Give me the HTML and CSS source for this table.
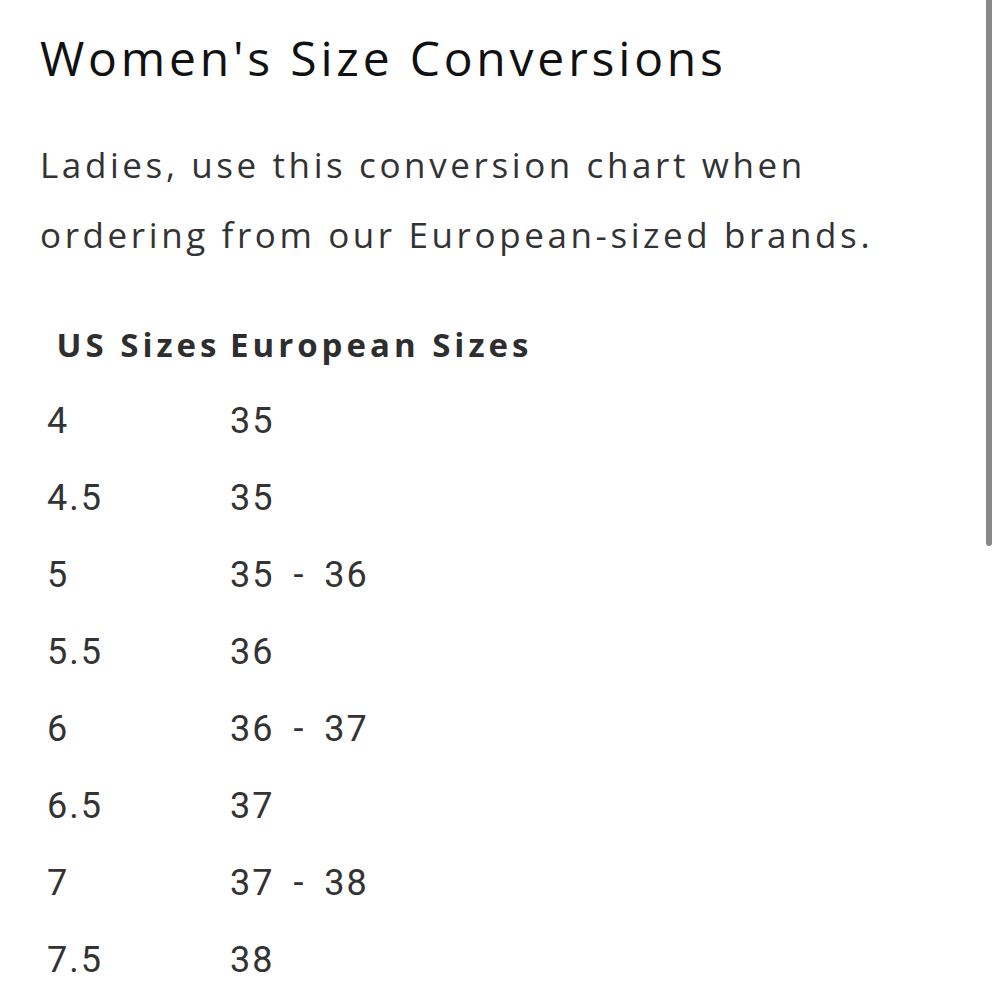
FILE: index.html
```html
<!DOCTYPE html>
<html lang="en">
<head>
<meta charset="utf-8">
<title>Women's Size Conversions</title>
<link rel="stylesheet" href="styles.css">
</head>
<body>
<main class="page">
  <h1 class="title">Women's Size Conversions</h1>
  <p class="intro">Ladies, use this conversion chart when ordering from our European-sized brands.</p>
  <table class="sizes">
    <thead>
      <tr><th class="col-us">US Sizes</th><th class="col-eu">European Sizes</th></tr>
    </thead>
    <tbody>
      <tr><td>4</td><td>35</td></tr>
      <tr><td>4.5</td><td>35</td></tr>
      <tr><td>5</td><td>35 - 36</td></tr>
      <tr><td>5.5</td><td>36</td></tr>
      <tr><td>6</td><td>36 - 37</td></tr>
      <tr><td>6.5</td><td>37</td></tr>
      <tr><td>7</td><td>37 - 38</td></tr>
      <tr><td>7.5</td><td>38</td></tr>
    </tbody>
  </table>
</main>
<div class="scrollbar"></div>
</body>
</html>
```
FILE: styles.css
```css
html, body {
  margin: 0;
  padding: 0;
  background: #ffffff;
  overflow: hidden;
}
.page {
  padding: 28px 0 0 40px;
  font-family: "Open Sans", "DejaVu Sans", sans-serif;
}
.title {
  margin: 0;
  font-size: 48px;
  line-height: 60px;
  font-weight: 400;
  color: #111111;
  letter-spacing: 3.8px;
}
.intro {
  margin: 42px 0 0 0;
  max-width: 880px;
  font-size: 35px;
  line-height: 70px;
  font-weight: 400;
  color: #333333;
  letter-spacing: 3.6px;
}
.sizes {
  margin: 50px 0 0 7px;
  border-collapse: collapse;
  border-spacing: 0;
}
.sizes th {
  padding: 0 0 13px 0;
  font-size: 33px;
  line-height: 50px;
  font-weight: 700;
  color: #2e2e2e;
  letter-spacing: 4px;
  white-space: nowrap;
}
.sizes .col-us {
  width: 183px;
  text-align: center;
}
.sizes .col-eu {
  text-align: left;
}
.sizes td {
  padding: 0;
  font-family: Roboto, "Liberation Sans", sans-serif;
  font-size: 36px;
  line-height: 77px;
  color: #333333;
  letter-spacing: 2px;
  word-spacing: 8px;
  white-space: nowrap;
}
.scrollbar {
  position: fixed;
  top: 0;
  left: 986px;
  width: 6px;
  height: 546px;
  background: #888888;
  border-radius: 0 0 3px 3px;
}
```
